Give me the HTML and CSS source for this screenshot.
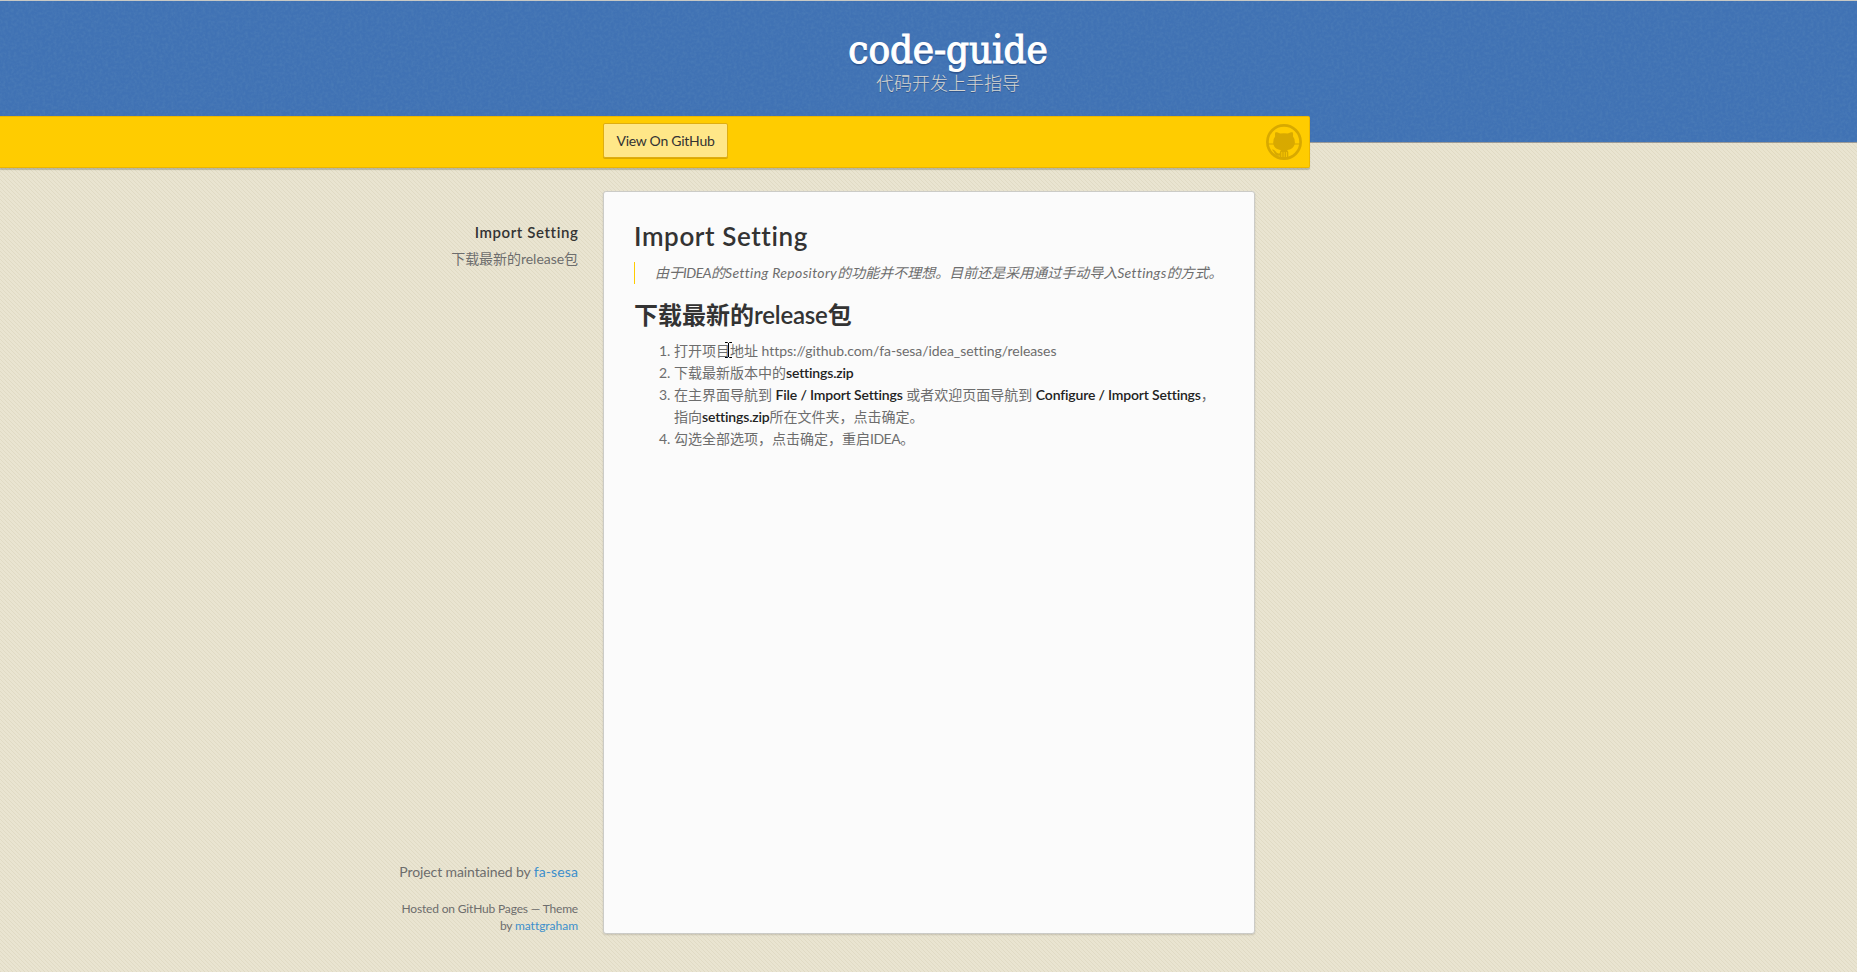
FILE: index.html
```
<!DOCTYPE html>
<html lang="zh-CN">
<head>
<meta charset="utf-8">
<title>code-guide</title>
<link rel="stylesheet" href="styles.css">
</head>
<body>
<header class="header">
  <svg class="grain" aria-hidden="true"><filter id="noise"><feTurbulence type="fractalNoise" baseFrequency=".35" numOctaves="2" seed="4"/><feColorMatrix values="0 0 0 0 .1  0 0 0 0 .25  0 0 0 0 .5  .9 0 0 0 -.32"/></filter><rect width="100%" height="100%" filter="url(#noise)"/></svg>
  <div class="header-inner">
    <h1 class="site-title">code-guide</h1>
    <h2 class="site-sub">代码开发上手指导</h2>
  </div>
</header>
<div class="banner">
  <a class="button">View On GitHub</a>
  <svg class="octocat" viewBox="0 0 36 36" width="36" height="36">
    <circle cx="18" cy="18" r="16.6" fill="none" stroke="#d8a900" stroke-width="2.7"/>
    <path d="M9.4 8.2C11 7.9 12.700 8.700 14 9.500Q18 8.800 22 9.500C23.400 8.700 25.100 7.900 26.700 8.200Q27.500 10.500 27 12.500Q29.300 15 28.900 18.700C28.400 23.500 25.200 25.600 21.200 26L22.300 28V34H13.800V31.600C10.600 32.300 9.500 31.300 8.400 29C7.800 27.800 7 27 6 25.600C8.100 25.200 9.200 27 10.200 28.300C11.200 29.500 12.300 29.600 13.800 29.200Q13.900 27.300 14.900 26C10.600 25.500 7.600 23.400 7.200 18.700Q6.900 15 9.100 12.500Q8.600 10.300 9.400 8.200Z" fill="#d8a900"/>
    <path d="M2 20H8M34 20H28" stroke="#d8a900" stroke-width="1.400" opacity=".7"/>
    <path d="M15.800 28V33M18.200 28V33M20.500 28V33" stroke="#fc0" stroke-width=".8"/>
  </svg>
</div>
<div class="columns">
  <aside class="side">
    <ul class="nav">
      <li class="nav-main">Import Setting</li>
      <li class="nav-sub">下载最新的release包</li>
    </ul>
    <footer class="footer">
      <p class="maintained">Project maintained by <a class="user">fa-sesa</a></p>
      <p class="hosted">Hosted on GitHub Pages — Theme<br>by <a class="author">mattgraham</a></p>
    </footer>
  </aside>
  <main class="content">
    <h1 class="title">Import Setting</h1>
    <blockquote class="quote">由于<span class="idea">IDEA</span>的<span class="repo">Setting Repository</span>的功能并不理想。目前还是采用通过手动导入<span class="repo">Settings</span>的方式。</blockquote>
    <h2 class="subtitle">下载最新的<span class="release">release</span>包</h2>
    <ol class="steps">
      <li>打开项目<span class="cursor-anchor"><svg class="cursor" width="7" height="16" viewBox="0 0 7 16"><path d="M0 .5H2.500L3.500 1.500L4.500 .5H7M3.500 1V15M0 15.500H2.500L3.500 14.500L4.500 15.500H7" fill="none" stroke="#000"/></svg></span>地址 <span class="url">https://github.com/fa-sesa/idea_setting/releases</span></li>
      <li>下载最新版本中的<strong>settings.zip</strong></li>
      <li>在主界面导航到 <strong>File / Import Settings</strong> 或者欢迎页面导航到 <strong>Configure / Import Settings</strong>，<br>指向<strong>settings.zip</strong>所在文件夹，点击确定。</li>
      <li>勾选全部选项，点击确定，重启<span class="idea">IDEA</span>。</li>
    </ol>
  </main>
</div>
</body>
</html>
```
FILE: styles.css
```
* { box-sizing: border-box; margin: 0; padding: 0; }
body {
  height: 972px;
  overflow: hidden;
  background: #e9e4d1 linear-gradient(45deg, #e0dac4 12.5%, transparent 12.5%, transparent 50%, #e0dac4 50%, #e0dac4 62.5%, transparent 62.5%) 0 0 / 4px 4px;
  font: 14px/22px Lato, "Noto Sans CJK SC", sans-serif;
  color: #6d6d6d;
}
.header {
  position: relative;
  height: 143px;
  border-top: 1px solid #c9c9c4;
  border-bottom: 1px solid #9a9a98;
  background: #4072b4;
}
.grain { position: absolute; inset: 0; width: 100%; height: 100%; opacity: .75; }
.header-inner { position: relative; width: 690px; margin-left: 603px; padding-top: 23px; text-align: center; }
.site-title {
  font: 400 40px/50px "DejaVu Serif Condensed", "DejaVu Serif", serif;
  font-stretch: condensed;
  letter-spacing: -.1px;
  color: #fff;
  -webkit-text-stroke: 1px #fff;
  text-shadow: 0 2px 1px #2b528c;
}
.site-sub { font-size: 18px; line-height: 18px; font-weight: 300; color: #d5d5d0; text-shadow: 0 1px 0 #2f568f; }
.banner {
  position: relative;
  display: flex;
  justify-content: space-between;
  align-items: flex-start;
  width: 1310px;
  height: 52px;
  margin-top: -27px;
  padding: 6px 8px 0 603px;
  background: #fc0;
  border: 1px solid #edb600;
  border-left: 0;
  border-radius: 0 2px 2px 0;
  box-shadow: 0 2px 1px rgba(70, 80, 60, .3);
}
.button {
  width: 125px;
  height: 35px;
  border: 1px solid #dfae10;
  border-radius: 2px;
  background: #ffe788;
  box-shadow: 0 1px 0 #dba900;
  color: #333;
  line-height: 33px;
  text-align: center;
  letter-spacing: -.26px;
}
.octocat { margin: 1px -1px 0 0; }
.columns { display: flex; gap: 25px; padding-top: 23px; }
.side { display: flex; flex-direction: column; justify-content: space-between; width: 578px; height: 743px; text-align: right; }
.nav { list-style: none; padding-top: 30px; }
.nav-main { font-size: 15px; font-weight: 600; color: #333; letter-spacing: .6px; height: 27px; margin-right: -.5px; }
.nav-sub { letter-spacing: -.04px; }
.maintained { letter-spacing: -.1px; margin-bottom: 17px; }
.hosted { font-size: 12px; line-height: 17px; letter-spacing: -.17px; }
.user { color: #3c8fcc; letter-spacing: .1px; }
.author { color: #3c8fcc; letter-spacing: -.03px; }
.content {
  width: 652px;
  height: 743px;
  padding: 30px;
  background: #fbfbfb;
  border: 1px solid #cbcbc7;
  border-radius: 3px;
  box-shadow: 0 1px 2px rgba(0, 0, 0, .14);
}
.title { font-size: 26px; font-weight: 600; line-height: 28px; letter-spacing: .6px; color: #333; }
.quote { margin-top: 12px; padding-left: 20px; border-left: 1px solid #fc0; font-style: italic; white-space: nowrap; }
.repo { letter-spacing: .35px; }
.subtitle { margin-top: 15px; font-size: 24px; line-height: 32px; color: #333; }
.idea { letter-spacing: -.5px; }
.release { font-weight: 600; letter-spacing: -.2px; }
.steps { margin-top: 9px; padding-left: 40px; white-space: nowrap; }
.url { letter-spacing: -.06px; }
strong { font-weight: 600; color: #222; letter-spacing: -.17px; }
.cursor-anchor { position: relative; }
.cursor { position: absolute; left: -5px; top: 0; }
```
